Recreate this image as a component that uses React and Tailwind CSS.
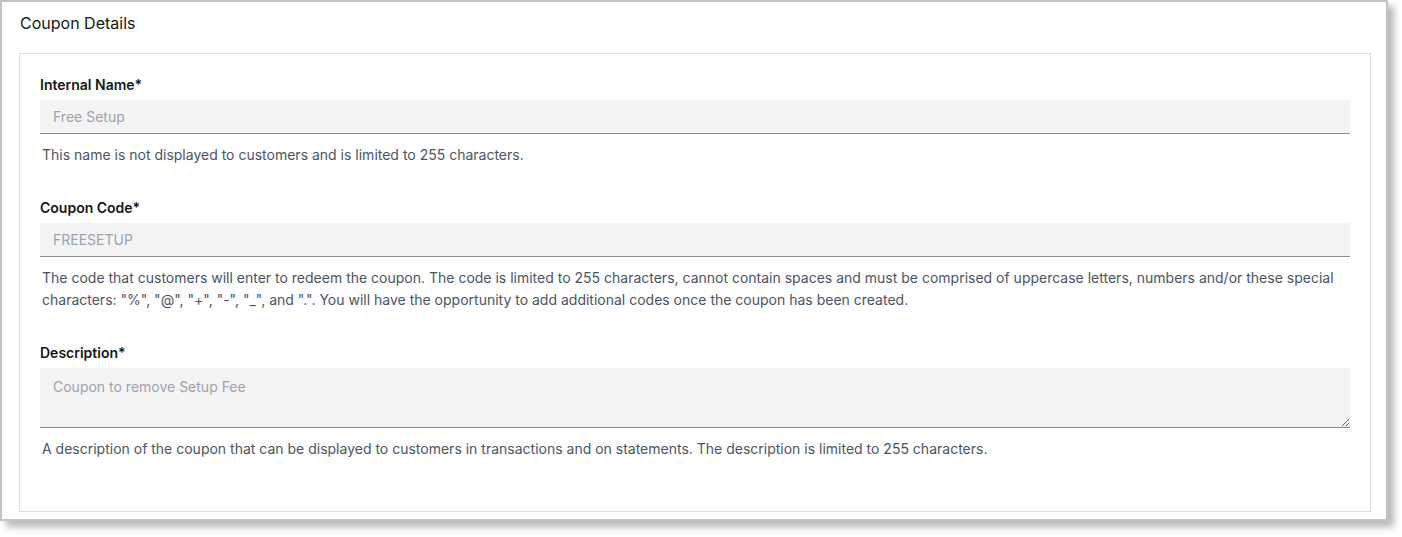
import React from "react";

const font = { fontFamily: "Inter, 'Noto Sans', sans-serif" };

function Field({ label, children, help }) {
  return (
    <div className="flex flex-col">
      <label className="text-[14px] leading-[18px] font-semibold text-[#161616]">{label}</label>
      <div className="mt-[6px]">{children}</div>
      <p className="mt-[10px] pl-[2px] text-[14px] leading-[22px] text-[#4b5563]">{help}</p>
    </div>
  );
}

const fieldClass =
  "w-full bg-[#f4f4f4] border-b border-[#8d8d8d] pl-[13px] pr-[12px] text-[14px] text-[#161616] placeholder:text-[#9ca3af] outline-none";

export default function App() {
  return (
    <div className="bg-white w-[1402px] h-[537px]" style={font}>
      <div className="w-[1388px] h-[521px] border-2 border-[#bfc4c8] bg-white shadow-[6px_6px_7px_rgba(0,0,0,0.28)] pt-[10px] pl-[17px] pr-[15px]">
        <h2 className="text-[16px] leading-[22px] font-normal text-[#161616] pl-[1px]">Coupon Details</h2>
        <div className="mt-[19px] h-[459px] border border-[#dcdcdc] px-[20px] pt-[22px] flex flex-col gap-[33px]">
          <Field
            label="Internal Name*"
            help="This name is not displayed to customers and is limited to 255 characters."
          >
            <input readOnly placeholder="Free Setup" className={`${fieldClass} h-[34px]`} />
          </Field>
          <Field
            label="Coupon Code*"
            help={'The code that customers will enter to redeem the coupon. The code is limited to 255 characters, cannot contain spaces and must be comprised of uppercase letters, numbers and/or these special characters: "%", "@", "+", "-", "_", and ".". You will have the opportunity to add additional codes once the coupon has been created.'}
          >
            <input readOnly placeholder="FREESETUP" className={`${fieldClass} h-[34px]`} />
          </Field>
          <Field
            label="Description*"
            help="A description of the coupon that can be displayed to customers in transactions and on statements. The description is limited to 255 characters."
          >
            <textarea
              readOnly
              placeholder="Coupon to remove Setup Fee"
              className={`${fieldClass} block h-[60px] pt-[9px] leading-[20px] resize-y`}
            />
          </Field>
        </div>
      </div>
    </div>
  );
}
